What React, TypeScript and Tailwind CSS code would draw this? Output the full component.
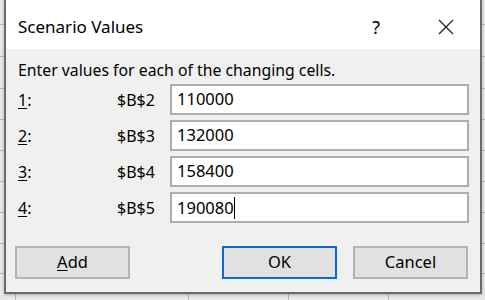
import React from 'react';

const ROWS = [
    { key: '1', cell: '$B$2', value: '110000' },
    { key: '2', cell: '$B$3', value: '132000' },
    { key: '3', cell: '$B$4', value: '158400' },
    { key: '4', cell: '$B$5', value: '190080' },
];

// sheet grid peeking out behind the dialog
const COL_LINES = [15, 188, 288, 388];
const ROW_LINES = [24, 56, 88, 119, 150, 181, 212, 243, 273];

function Button({ children, focused }: { children: React.ReactNode; focused?: boolean }) {
    return (
        <button
            className={`w-[115px] h-[33px] bg-[#e1e1e1] text-[16.5px] text-black flex items-center justify-center ${
                focused ? 'border-2 border-[#0c68d5]' : 'border-2 border-[#b4b4b4]'
            }`}
        >
            {children}
        </button>
    );
}

export default function App() {
    return (
        <div
            className="relative w-[485px] h-[300px] overflow-hidden bg-[#e8e8e8]"
            style={{ fontFamily: '"Noto Sans", "Open Sans", sans-serif' }}
        >
            {/* Spreadsheet behind */}
            <div className="absolute inset-0">
                {COL_LINES.map(x => (
                    <div key={x} className="absolute top-0 bottom-0 w-px bg-[#b9b9b9]" style={{ left: x }} />
                ))}
                {ROW_LINES.map(y => (
                    <div key={y} className="absolute left-0 right-0 h-px bg-[#b9b9b9]" style={{ top: y }} />
                ))}
            </div>

            {/* Dialog */}
            <div className="relative ml-[4px] w-[478px] h-[294px] border-x-2 border-b-2 border-[#6b6b6b] bg-[#f0f0f0] flex flex-col shadow-[0_1px_3px_rgba(0,0,0,0.25)]">
                {/* Title bar */}
                <div className="h-[49px] bg-white flex items-center pt-[4px] pl-[12px] pr-[26px] text-black">
                    <span className="text-[17px]">Scenario Values</span>
                    <span className="ml-auto text-[18px] leading-none">?</span>
                    <svg className="ml-[58px]" width="16" height="16" viewBox="0 0 16 16">
                        <path d="M1 1 L15 15 M15 1 L1 15" stroke="#222" strokeWidth="1.3" fill="none" />
                    </svg>
                </div>

                {/* Body */}
                <div className="flex-1 pt-[11px] pl-[12px] pr-[9px] text-black">
                    <div className="h-[20px] leading-[20px] text-[15.8px]">
                        Enter values for each of the changing cells.
                    </div>
                    <div className="mt-[4px] flex flex-col gap-[5px]">
                        {ROWS.map((r, i) => (
                            <div key={r.key} className="h-[31px] flex items-center text-[16px]">
                                <span className="w-[99px]">
                                    <span className="underline underline-offset-2">{r.key}</span>:
                                </span>
                                <span className="w-[53px]">{r.cell}</span>
                                <div className="w-[299px] h-[31px] bg-white border-2 border-[#adadad] flex items-center pl-[5px] text-[16.5px]">
                                    <span className={i === 3 ? 'border-r border-black leading-[22px]' : ''}>{r.value}</span>
                                </div>
                            </div>
                        ))}
                    </div>
                    <div className="mt-[23px] flex">
                        <div className="-ml-[3px]">
                            <Button>
                                <span className="underline underline-offset-2">A</span>dd
                            </Button>
                        </div>
                        <div className="ml-[92px]">
                            <Button focused>OK</Button>
                        </div>
                        <div className="ml-[16px]">
                            <Button>Cancel</Button>
                        </div>
                    </div>
                </div>
            </div>
        </div>
    );
}
